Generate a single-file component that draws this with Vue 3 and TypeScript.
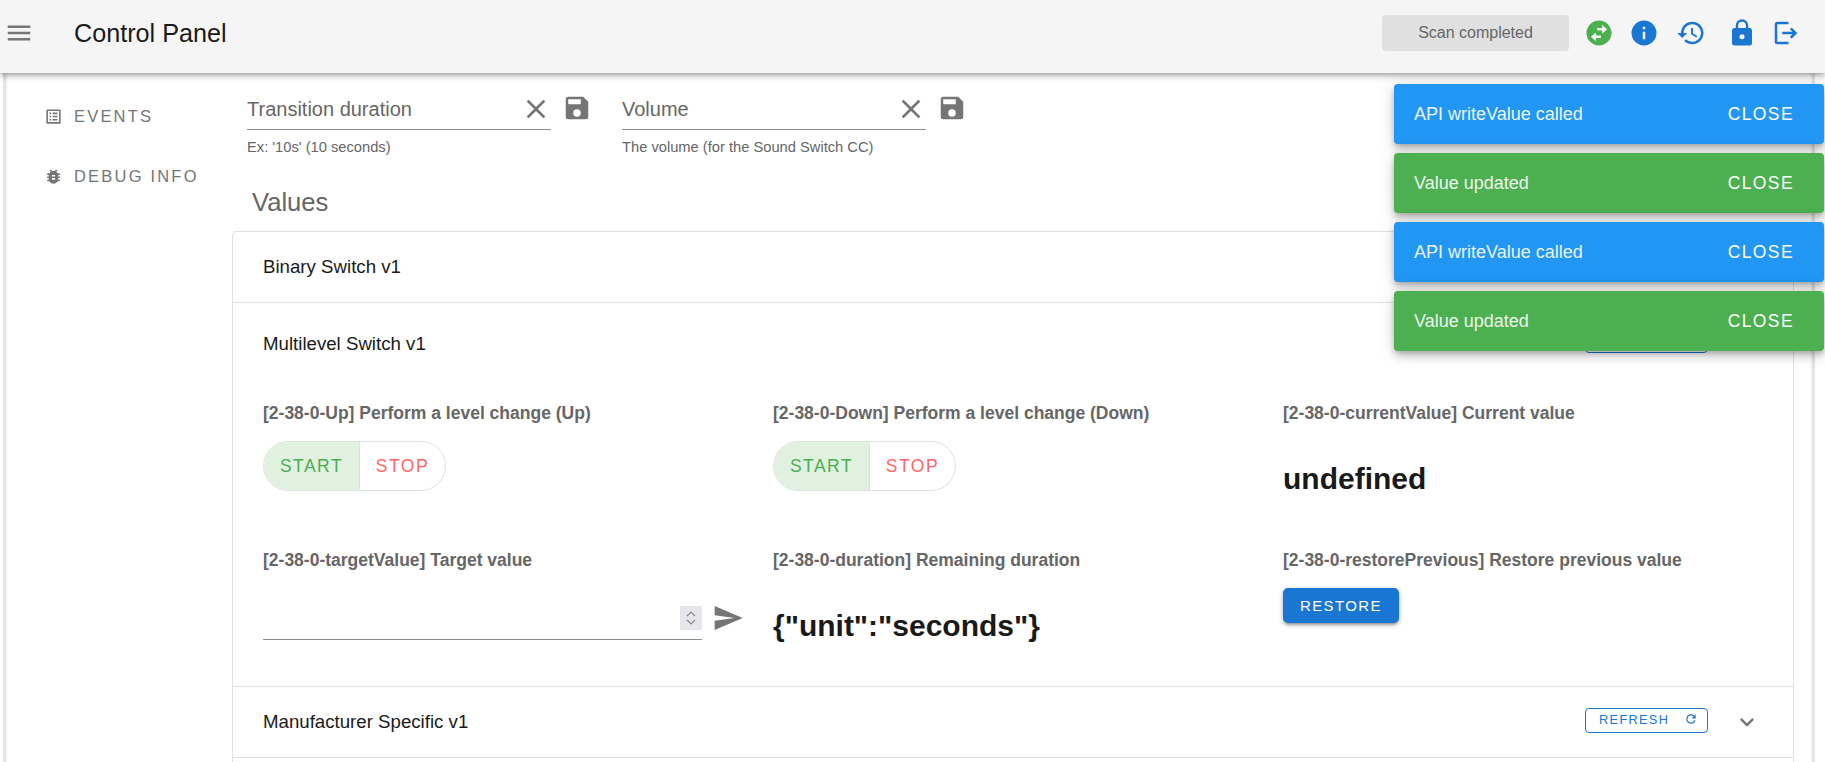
<script setup lang="ts">
interface Toast { text: string; kind: string }
const toasts: Toast[] = [
  { text: 'API writeValue called', kind: 'info' },
  { text: 'Value updated', kind: 'success' },
  { text: 'API writeValue called', kind: 'info' },
  { text: 'Value updated', kind: 'success' },
]
</script>

<template>
  <div class="app">
    <header class="bar">
      <svg class="menu" viewBox="0 0 24 24"><path d="M3 6h18v2H3zM3 11h18v2H3zM3 16h18v2H3z" /></svg>
      <h1 class="title">Control Panel</h1>
      <div class="status">Scan completed</div>
      <div class="bar-icons">
        <svg class="ic green" viewBox="0 0 24 24"><path d="M12 2a10 10 0 1 0 0 20 10 10 0 0 0 0-20zm2.5 3.5 4 3.5-4 3.5V10h-4V8h4V5.500zm-5 13-4-3.500 4-3.500V14h4v2h-4v2.500z" /></svg>
        <svg class="ic" viewBox="0 0 24 24"><path d="M12 2a10 10 0 1 0 0 20 10 10 0 0 0 0-20zm1 15h-2v-6h2v6zm0-8h-2V7h2v2z" /></svg>
        <svg class="ic hist" viewBox="0 0 24 24"><path d="M13 3a9 9 0 0 0-9 9H1l3.890 3.890.07.140L9 12H6a7 7 0 1 1 2.050 4.950l-1.420 1.420A9 9 0 1 0 13 3zm-1 5v5l4.280 2.540.72-1.210-3.500-2.080V8H12z" /></svg>
        <svg class="ic lock" viewBox="0 0 24 24"><path d="M18 8h-1V6a5 5 0 0 0-10 0v2H6a2 2 0 0 0-2 2v10c0 1.100.9 2 2 2h12a2 2 0 0 0 2-2V10a2 2 0 0 0-2-2zm-6 9a2 2 0 1 1 0-4 2 2 0 0 1 0 4zm3.100-9H8.900V6a3.100 3.100 0 0 1 6.200 0v2z" /></svg>
        <svg class="ic" viewBox="0 0 24 24"><path d="M5 3h9v2H5v14h9v2H5a2 2 0 0 1-2-2V5c0-1.100.9-2 2-2zm11.500 4.500L21 12l-4.500 4.500-1.410-1.410L17.170 13H9v-2h8.170l-2.080-2.090L16.500 7.500z" /></svg>
      </div>
    </header>

    <div class="body">
      <nav class="nav">
        <a class="nav-item">
          <svg class="nav-ic" viewBox="0 0 24 24"><path d="M19 5v14H5V5h14m1.100-2H3.900c-.5 0-.9.4-.9.900v16.200c0 .4.400.9.900.9h16.200c.4 0 .9-.5.900-.9V3.900c0-.5-.5-.9-.9-.9zM11 7h6v2h-6V7zm0 4h6v2h-6v-2zm0 4h6v2h-6v-2zM7 7h2v2H7V7zm0 4h2v2H7v-2zm0 4h2v2H7v-2z" /></svg>
          EVENTS
        </a>
        <a class="nav-item">
          <svg class="nav-ic" viewBox="0 0 24 24"><path d="M20 8h-2.810a5.985 5.985 0 0 0-1.820-1.960L17 4.410 15.590 3l-2.170 2.170a6.002 6.002 0 0 0-2.830 0L8.410 3 7 4.410l1.620 1.630C7.880 6.550 7.260 7.220 6.810 8H4v2h2.090c-.05.330-.09.660-.09 1v1H4v2h2v1c0 .340.040.670.090 1H4v2h2.810c1.040 1.790 2.970 3 5.190 3s4.150-1.210 5.190-3H20v-2h-2.090c.05-.330.090-.660.090-1v-1h2v-2h-2v-1c0-.340-.040-.670-.090-1H20V8zm-6 8h-4v-2h4v2zm0-4h-4v-2h4v2z" /></svg>
          DEBUG INFO
        </a>
      </nav>

      <main class="main">
        <div class="fields">
          <div class="field">
            <div class="input-row">
              <div class="input-line">
                <span class="input-label">Transition duration</span>
                <svg class="clear" viewBox="0 0 24 24"><path d="M19 6.410 17.590 5 12 10.590 6.410 5 5 6.410 10.590 12 5 17.590 6.410 19 12 13.410 17.590 19 19 17.590 13.410 12z" /></svg>
              </div>
              <svg class="save" viewBox="0 0 24 24"><path d="M17 3H5a2 2 0 0 0-2 2v14a2 2 0 0 0 2 2h14a2 2 0 0 0 2-2V7l-4-4zm-5 16a3 3 0 1 1 0-6 3 3 0 0 1 0 6zm3-10H5V5h10v4z" /></svg>
            </div>
            <div class="hint">Ex: '10s' (10 seconds)</div>
          </div>
          <div class="field">
            <div class="input-row">
              <div class="input-line">
                <span class="input-label">Volume</span>
                <svg class="clear" viewBox="0 0 24 24"><path d="M19 6.410 17.590 5 12 10.590 6.410 5 5 6.410 10.590 12 5 17.590 6.410 19 12 13.410 17.590 19 19 17.590 13.410 12z" /></svg>
              </div>
              <svg class="save" viewBox="0 0 24 24"><path d="M17 3H5a2 2 0 0 0-2 2v14a2 2 0 0 0 2 2h14a2 2 0 0 0 2-2V7l-4-4zm-5 16a3 3 0 1 1 0-6 3 3 0 0 1 0 6zm3-10H5V5h10v4z" /></svg>
            </div>
            <div class="hint">The volume (for the Sound Switch CC)</div>
          </div>
        </div>

        <h2 class="values">Values</h2>

        <section class="panels">
          <div class="row">
            <span class="row-title">Binary Switch v1</span>
          </div>
          <div class="open">
            <div class="open-head">
              <span class="row-title">Multilevel Switch v1</span>
              <button class="refresh">REFRESH<svg viewBox="0 0 24 24"><path d="M17.650 6.350A7.958 7.958 0 0 0 12 4a8 8 0 1 0 7.730 10h-2.080A6 6 0 1 1 12 6c1.660 0 3.140.69 4.220 1.780L13 11h7V4l-2.350 2.350z" /></svg></button>
              <svg class="chev" viewBox="0 0 24 24"><path d="M7.410 15.410 12 10.830l4.590 4.580L18 14l-6-6-6 6z" /></svg>
            </div>
            <div class="grid">
              <div class="cell">
                <div class="label">[2-38-0-Up] Perform a level change (Up)</div>
                <div class="toggle"><span class="start">START</span><span class="stop">STOP</span></div>
              </div>
              <div class="cell">
                <div class="label">[2-38-0-Down] Perform a level change (Down)</div>
                <div class="toggle"><span class="start">START</span><span class="stop">STOP</span></div>
              </div>
              <div class="cell">
                <div class="label">[2-38-0-currentValue] Current value</div>
                <div class="big">undefined</div>
              </div>
              <div class="cell">
                <div class="label">[2-38-0-targetValue] Target value</div>
                <div class="num-row">
                  <div class="num-line">
                    <span class="spin">
                      <svg viewBox="0 0 10 16"><path d="M1 6l4-4 4 4M1 10l4 4 4-4" /></svg>
                    </span>
                  </div>
                  <svg class="send" viewBox="0 0 24 24"><path d="M2.010 21 23 12 2.010 3 2 10l15 2-15 2z" /></svg>
                </div>
              </div>
              <div class="cell">
                <div class="label">[2-38-0-duration] Remaining duration</div>
                <div class="big">{"unit":"seconds"}</div>
              </div>
              <div class="cell">
                <div class="label">[2-38-0-restorePrevious] Restore previous value</div>
                <button class="restore">RESTORE</button>
              </div>
            </div>
          </div>
          <div class="row">
            <span class="row-title">Manufacturer Specific v1</span>
            <button class="refresh">REFRESH<svg viewBox="0 0 24 24"><path d="M17.650 6.350A7.958 7.958 0 0 0 12 4a8 8 0 1 0 7.730 10h-2.080A6 6 0 1 1 12 6c1.660 0 3.140.69 4.220 1.780L13 11h7V4l-2.350 2.350z" /></svg></button>
            <svg class="chev" viewBox="0 0 24 24"><path d="M7.410 8.590 12 13.170l4.590-4.580L18 10l-6 6-6-6z" /></svg>
          </div>
          <div class="row"></div>
        </section>
      </main>
    </div>

    <div class="toasts">
      <div v-for="(t, i) in toasts" :key="i" class="toast" :class="t.kind">
        <span class="toast-text">{{ t.text }}</span>
        <span class="toast-close">CLOSE</span>
      </div>
    </div>
  </div>
</template>

<style>
html, body { margin: 0; background: #fff; overflow: hidden; }
</style>

<style scoped>
.app {
  position: relative;
  width: 1825px;
  height: 762px;
  overflow: hidden;
  background: #fff;
  font-family: "Liberation Sans", Arial, sans-serif;
}
button { font-family: inherit; }
.bar {
  position: relative;
  z-index: 2;
  height: 73px;
  box-sizing: border-box;
  display: flex;
  align-items: center;
  padding: 0 0 7px 4px;
  background: #f5f5f5;
  box-shadow: 0 2px 4px -1px rgba(0,0,0,.2), 0 4px 5px rgba(0,0,0,.14), 0 1px 10px rgba(0,0,0,.12);
}
.menu { width: 30px; height: 30px; fill: #757575; flex: none; }
.title {
  margin: 0 0 0 40px;
  font-size: 25.200px;
  font-weight: 400;
  color: #1a1a1a;
  flex: 1;
}
.status {
  width: 187px;
  height: 36px;
  line-height: 36px;
  text-align: center;
  border-radius: 4px;
  background: #e0e0e0;
  color: #666;
  font-size: 16px;
}
.bar-icons {
  display: flex;
  align-items: center;
  gap: 15px;
  margin: 0 24px 0 15px;
}
.ic { width: 30px; height: 30px; fill: #1976d2; }
.ic.green { fill: #4caf50; }
.ic.hist { margin-left: 2px; }
.ic.lock { margin-left: 6px; margin-right: -1px; }
.body {
  display: flex;
  height: 689px;
  margin: 0 10px 0 3px;
  border-left: 3px solid #e4e4e4;
  border-right: 3px solid #e4e4e4;
  box-shadow: inset 2px 0 2px -1px #f0f0f0, inset -2px 0 2px -1px #f0f0f0;
}
.nav { width: 226px; flex: none; padding-top: 23px; box-sizing: border-box; }
.nav-item {
  display: flex;
  align-items: center;
  height: 40px;
  margin-bottom: 20px;
  padding-left: 38px;
  color: #757575;
  font-size: 16.500px;
  letter-spacing: 2.200px;
  white-space: nowrap;
}
.nav-ic { width: 19px; height: 19px; fill: #757575; margin-right: 11px; flex: none; }
.main { flex: 1; min-width: 0; }
.fields { display: flex; padding: 24px 0 0 15px; }
.field { width: 375px; }
.input-row { display: flex; align-items: flex-start; }
.input-line {
  width: 304px;
  height: 32px;
  display: flex;
  align-items: flex-start;
  justify-content: space-between;
  border-bottom: 1px solid #8c8c8c;
}
.input-label { font-size: 20px; line-height: 23px; color: #666; margin-top: 1px; }
.clear { width: 32px; height: 32px; fill: #757575; margin: -4px -1px 0 0; }
.save { width: 30px; height: 30px; fill: #757575; margin: -4px 0 0 11px; }
.hint { margin-top: 8px; font-size: 14.700px; line-height: 18px; color: #666; }
.values {
  margin: 31px 0 0 20px;
  font-size: 25.600px;
  line-height: 30px;
  font-weight: 400;
  color: #666;
}
.panels {
  margin-top: 14px;
  width: 1562px;
  box-sizing: border-box;
  border: 1px solid #e0e0e0;
  border-radius: 4px 4px 0 0;
}
.row {
  display: flex;
  align-items: center;
  height: 70px;
  padding: 0 32px 0 30px;
  border-bottom: 1px solid #e0e0e0;
}
.row .refresh { margin-bottom: 4px; }
.open { border-bottom: 1px solid #e0e0e0; }
.open-head {
  display: flex;
  align-items: center;
  height: 81px;
  padding: 0 32px 0 30px;
}
.open-head .refresh { margin-bottom: 6px; }
.row-title { font-size: 18.670px; color: #1a1a1a; flex: 1; }
.refresh {
  width: 123px;
  height: 25px;
  padding: 0 0 2px 13px;
  box-sizing: border-box;
  display: flex;
  align-items: center;
  gap: 15px;
  border: 1px solid #1976d2;
  border-radius: 4px;
  background: #fff;
  color: #1976d2;
  font-size: 12.800px;
  letter-spacing: 1.300px;
}
.refresh svg { width: 14px; height: 14px; fill: #1976d2; }
.chev { width: 28px; height: 28px; fill: #757575; margin-left: 25px; }
.grid {
  display: grid;
  grid-template-columns: repeat(3, 510px);
  grid-template-rows: 147px auto;
  padding-left: 30px;
  height: 302px;
}
.cell { min-width: 0; }
.label { font-size: 17.500px; font-weight: 700; color: #666; line-height: 20px; margin-top: 19px; }
.toggle {
  display: inline-flex;
  margin-top: 18px;
  height: 50px;
  box-sizing: border-box;
  border: 1px solid #e0e0e0;
  border-radius: 25px;
  overflow: hidden;
  font-size: 17.500px;
  letter-spacing: 1.500px;
  line-height: 48px;
}
.start { width: 95px; text-align: center; color: #4caf50; background: #e0f1e0; border-right: 1px solid #e0e0e0; }
.stop { width: 85px; text-align: center; color: #f66; }
.big { font-size: 30px; font-weight: 700; color: #1a1a1a; line-height: 34px; margin-top: 39px; }
.num-row { display: flex; align-items: flex-start; margin-top: 23px; }
.num-line {
  width: 439px;
  height: 47px;
  box-sizing: border-box;
  border-bottom: 1px solid #8c8c8c;
  display: flex;
  justify-content: flex-end;
  padding-top: 13px;
}
.spin { width: 22px; height: 24px; background: #e6e6ea; display: flex; align-items: center; justify-content: center; }
.spin svg { width: 10px; height: 16px; fill: none; stroke: #8a8a8a; stroke-width: 1.200; }
.send { width: 32px; height: 32px; fill: #757575; margin-left: 10px; margin-top: 9px; }
.restore {
  display: block;
  margin-top: 18px;
  width: 116px;
  height: 35px;
  padding: 0;
  border: 0;
  border-radius: 5px;
  background: #1976d2;
  color: #fff;
  font-size: 15px;
  letter-spacing: 1.400px;
  box-shadow: 0 3px 3px -2px rgba(0,0,0,.3), 0 2px 4px rgba(0,0,0,.2), 0 1px 6px rgba(0,0,0,.12);
}
.toasts {
  position: absolute;
  z-index: 3;
  top: 84px;
  right: 1px;
  width: 430px;
  display: flex;
  flex-direction: column;
  gap: 9px;
}
.toast {
  height: 60px;
  display: flex;
  align-items: center;
  justify-content: space-between;
  padding: 0 30px 0 20px;
  border-radius: 4px;
  color: #fff;
  box-shadow: 0 3px 5px -1px rgba(0,0,0,.2), 0 6px 10px rgba(0,0,0,.14), 0 1px 18px rgba(0,0,0,.12);
}
.toast.info { background: #2196f3; }
.toast.success { background: #4caf50; }
.toast-text { font-size: 18px; opacity: .9; }
.toast-close { font-size: 17.500px; letter-spacing: 1.400px; }
</style>
